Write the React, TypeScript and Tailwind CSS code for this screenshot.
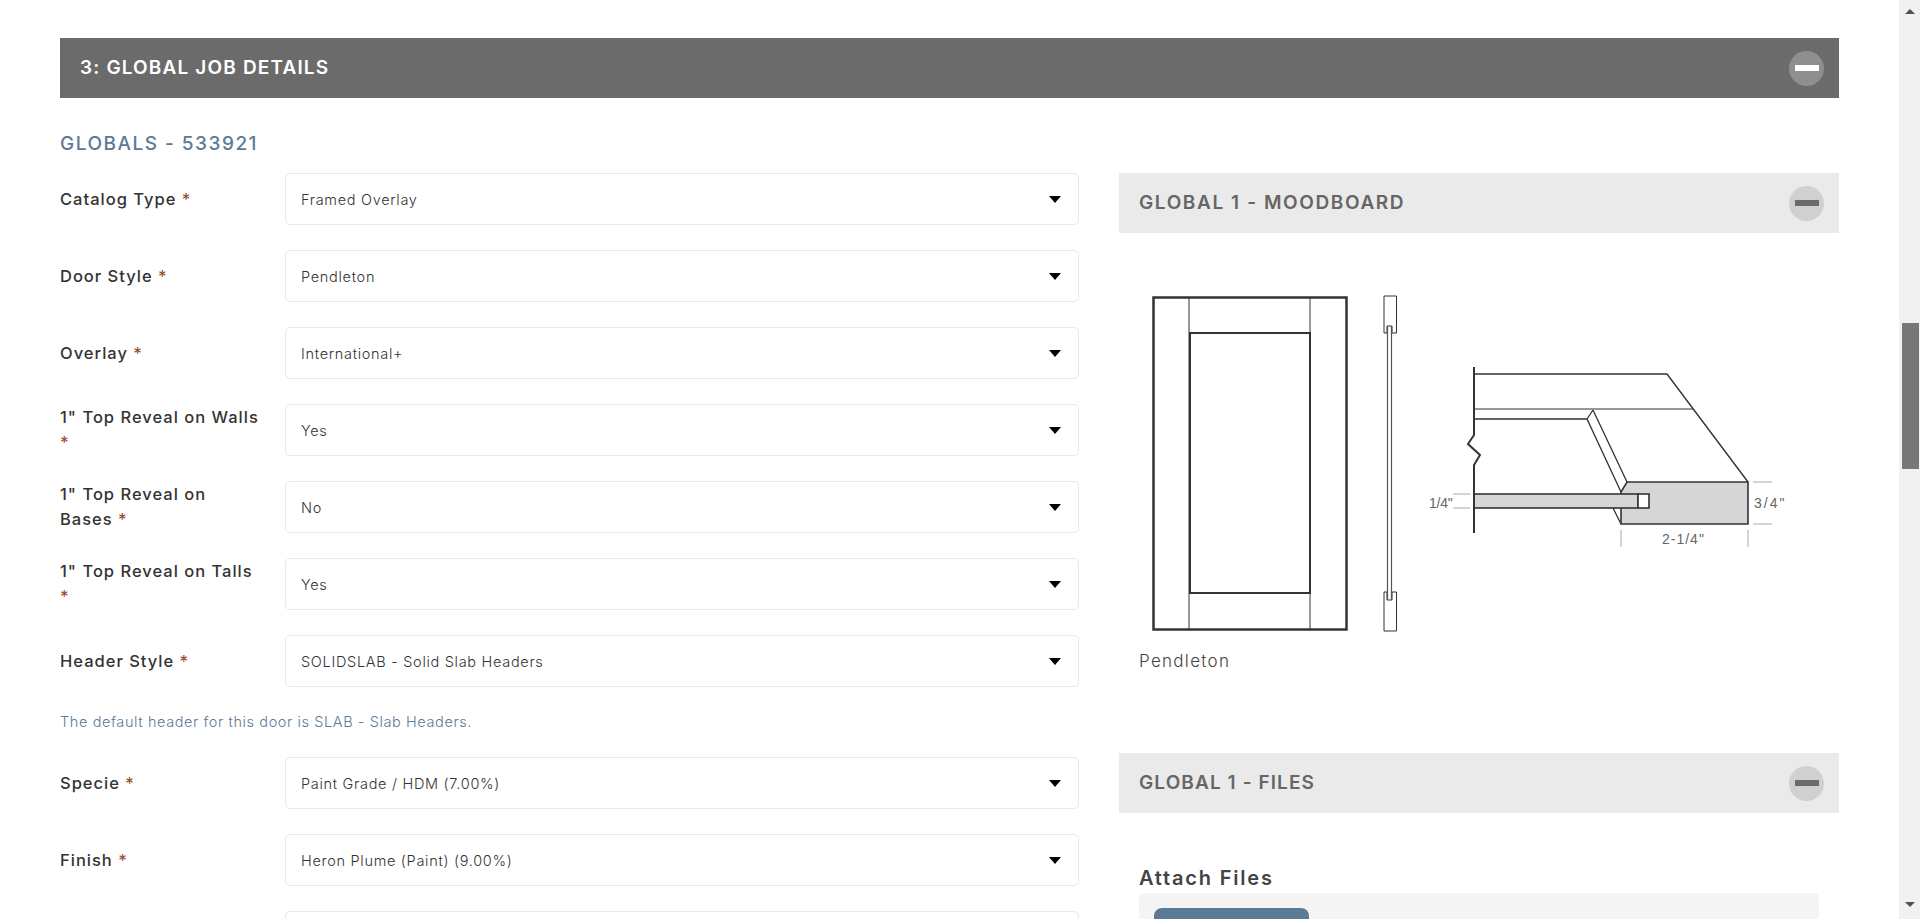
import type {ReactNode} from "react";

const font = "font-['Inter','Liberation_Sans',sans-serif]";

type FieldProps = {
    label: ReactNode;
    value: string;
};

const fieldsTop: FieldProps[] = [
    {label: "Catalog Type", value: "Framed Overlay"},
    {label: "Door Style", value: "Pendleton"},
    {label: "Overlay", value: "International+"},
    {label: <>1" Top Reveal on Walls<br /></>, value: "Yes"},
    {label: <>1" Top Reveal on<br />Bases</>, value: "No"},
    {label: <>1" Top Reveal on Talls<br /></>, value: "Yes"},
    {label: "Header Style", value: "SOLIDSLAB - Solid Slab Headers"},
];

const fieldsBottom: FieldProps[] = [
    {label: "Specie", value: "Paint Grade / HDM (7.00%)"},
    {label: "Finish", value: "Heron Plume (Paint) (9.00%)"},
];

function Field({label, value}: FieldProps) {
    return (
        <div className="flex items-center">
            <div className="w-[225px] shrink-0 text-[16.5px] leading-[25px] font-medium tracking-[1px] text-[#333]">
                {label} <span className="text-[#9a4f32]">*</span>
            </div>
            <div className="flex h-[52px] flex-1 items-center justify-between rounded-[5px] border border-[#e8e8e8] bg-white pr-[17px] pl-[15px] text-[14.5px] leading-[21px] tracking-[0.7px] font-light text-[#333]">
                <span>{value}</span>
                <span className="h-0 w-0 border-x-[6px] border-t-[7px] border-x-transparent border-t-black" />
            </div>
        </div>
    );
}

function Toggle({dark}: {dark?: boolean}) {
    return (
        <span className={`flex h-[35px] w-[35px] items-center justify-center rounded-full ${dark ? "bg-[#8f8f8f]" : "bg-[#d0d0d0]"}`}>
            <span className={`h-[6px] w-[24px] ${dark ? "bg-white" : "bg-[#6b6b6b]"}`} />
        </span>
    );
}

function SubHeader({title, spacing}: {title: string; spacing: string}) {
    return (
        <div className="flex h-[60px] items-center justify-between bg-[#eaeaea] pr-[15px] pl-[20px]">
            <span className={`pt-[1px] text-[19px] font-semibold text-[#666] ${spacing}`}>{title}</span>
            <Toggle />
        </div>
    );
}

function DoorDrawing() {
    return (
        <svg width="680" height="380" viewBox="1139 270 680 380" className="block" fill="none" stroke="#333">
            {/* door front */}
            <rect x="1153.5" y="297.5" width="193" height="332" strokeWidth="2.5" />
            <path d="M1189 297V630M1310 297V630" strokeWidth="1" />
            <rect x="1190" y="333" width="120" height="260" strokeWidth="2" />
            {/* door side profile */}
            <path d="M1384 296H1396.5V333H1392V326H1387V333H1384Z" strokeWidth="1" />
            <path d="M1384 631H1396.5V592H1392V600H1387V592H1384Z" strokeWidth="1" />
            <path d="M1387.5 326V600M1391.5 326V600" stroke="#555" strokeWidth="1.2" />
            {/* section */}
            <path d="M1627 482H1748V524H1621V492Z" fill="#d6d6d6" stroke="#333" strokeWidth="1.6" />
            <rect x="1474" y="494" width="164" height="14" fill="#d6d6d6" strokeWidth="1.6" />
            <rect x="1638" y="494" width="11" height="14" fill="#fff" strokeWidth="1.6" />
            <path d="M1474 367V435L1468 444L1480 455L1474 465V533" strokeWidth="2" />
            <path d="M1474 374H1667L1748 482" strokeWidth="1.4" />
            <path d="M1474 409H1693" strokeWidth="1.2" />
            <path d="M1474 419H1587L1621 492M1593 410L1627 482M1587 419L1593 410M1613 508L1621 524" strokeWidth="1.3" />
            <path d="M1453 494H1470M1453 508H1470M1753 482H1772M1753 524H1772M1621 530V547M1748 530V547" stroke="#aaa" strokeWidth="1" />
            <g fill="#666" stroke="none" fontFamily="'Liberation Sans', sans-serif">
                <text x="1429" y="508" fontSize="14" letterSpacing="-0.2">1/4"</text>
                <text x="1754" y="508" fontSize="14" letterSpacing="2">3/4"</text>
                <text x="1662" y="544" fontSize="14" letterSpacing="1">2-1/4"</text>
            </g>
        </svg>
    );
}

export default function App() {
    return (
        <div className={`flex h-[919px] overflow-hidden bg-white ${font}`}>
            <main className="min-w-0 flex-1 px-[60px] pt-[38px]">
                <div className="flex h-[60px] items-center justify-between bg-[#6b6b6b] pr-[15px] pl-[20px]">
                    <h2 className="pt-[1px] text-[19px] font-semibold tracking-[1.15px] text-white">3: GLOBAL JOB DETAILS</h2>
                    <Toggle dark />
                </div>

                <h3 className="mt-[34px] mb-[17px] h-[24px] text-[19px] leading-[24px] font-medium tracking-[1.5px] text-[#5b7a96]">
                    GLOBALS - 533921
                </h3>

                <div className="flex gap-[40px]">
                    <div className="flex w-[1019px] shrink-0 flex-col gap-[25px]">
                        {fieldsTop.map((field) => (
                            <Field key={field.value + String(field.label)} {...field} />
                        ))}
                        <p className="h-[20px] text-[14.5px] leading-[20px] font-light tracking-[0.6px] text-[#5b7a96]">
                            The default header for this door is SLAB - Slab Headers.
                        </p>
                        {fieldsBottom.map((field) => (
                            <Field key={field.value} {...field} />
                        ))}
                        <div className="ml-[225px] h-[52px] rounded-[5px] border border-[#e8e8e8]" />
                    </div>

                    <div className="min-w-0 flex-1">
                        <SubHeader title="GLOBAL 1 - MOODBOARD" spacing="tracking-[1.6px]" />
                        <div className="mt-[37px] ml-[20px]">
                            <DoorDrawing />
                        </div>
                        <p className="ml-[20px] -mt-[1px] h-[24px] text-[17px] leading-[24px] font-light tracking-[1.3px] text-[#444]">Pendleton</p>
                        <div className="mt-[80px]">
                            <SubHeader title="GLOBAL 1 - FILES" spacing="tracking-[1.1px]" />
                        </div>
                        <h4 className="mt-[53px] ml-[20px] h-[24px] text-[20px] leading-[24px] font-semibold tracking-[1.8px] text-[#444]">Attach Files</h4>
                        <div className="mx-[20px] mt-[3px] h-[80px] rounded-[5px] bg-[#f4f4f4] px-[15px] pt-[15px]">
                            <div className="h-[50px] w-[155px] rounded-[8px] bg-[#5b7a96]" />
                        </div>
                    </div>
                </div>
            </main>

            <aside className="flex h-full w-[21px] shrink-0 flex-col items-center bg-[#f1f1f1] pl-[1px]">
                <span className="mt-[9px] h-0 w-0 border-x-[5px] border-b-[5px] border-x-transparent border-b-[#505050]" />
                <span className="mt-[309px] h-[146px] w-[17px] bg-[#777]" />
                <span className="mt-[433px] h-0 w-0 border-x-[5px] border-t-[5px] border-x-transparent border-t-[#505050]" />
            </aside>
        </div>
    );
}
